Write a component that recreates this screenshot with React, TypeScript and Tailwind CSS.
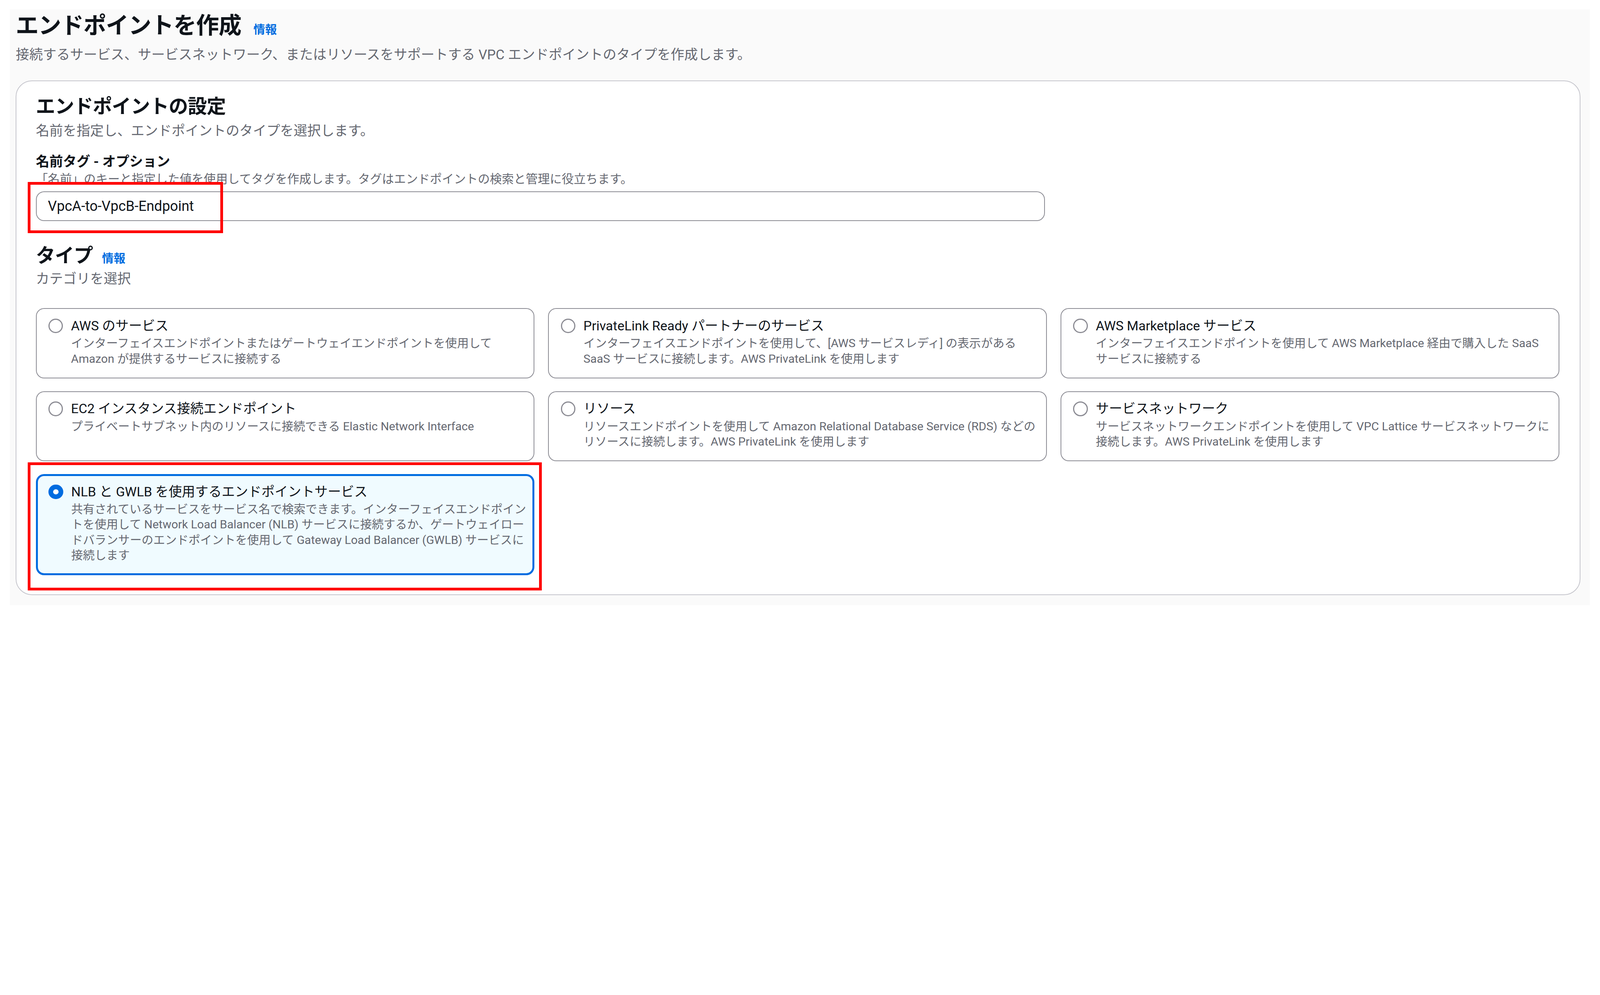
import React from 'react';

type Tile = {
  title: string;
  lines: string[];
  selected?: boolean;
};

const tiles: Tile[] = [
  {
    title: 'AWS のサービス',
    lines: ['インターフェイスエンドポイントまたはゲートウェイエンドポイントを使用して', 'Amazon が提供するサービスに接続する'],
  },
  {
    title: 'PrivateLink Ready パートナーのサービス',
    lines: ['インターフェイスエンドポイントを使用して、[AWS サービスレディ] の表示がある', 'SaaS サービスに接続します。AWS PrivateLink を使用します'],
  },
  {
    title: 'AWS Marketplace サービス',
    lines: ['インターフェイスエンドポイントを使用して AWS Marketplace 経由で購入した SaaS', 'サービスに接続する'],
  },
  {
    title: 'EC2 インスタンス接続エンドポイント',
    lines: ['プライベートサブネット内のリソースに接続できる Elastic Network Interface'],
  },
  {
    title: 'リソース',
    lines: ['リソースエンドポイントを使用して Amazon Relational Database Service (RDS) などの', 'リソースに接続します。AWS PrivateLink を使用します'],
  },
  {
    title: 'サービスネットワーク',
    lines: ['サービスネットワークエンドポイントを使用して VPC Lattice サービスネットワークに', '接続します。AWS PrivateLink を使用します'],
  },
  {
    title: 'NLB と GWLB を使用するエンドポイントサービス',
    selected: true,
    lines: [
      '共有されているサービスをサービス名で検索できます。インターフェイスエンドポイン',
      'トを使用して Network Load Balancer (NLB) サービスに接続するか、ゲートウェイロー',
      'ドバランサーのエンドポイントを使用して Gateway Load Balancer (GWLB) サービスに',
      '接続します',
    ],
  },
];

function TypeTile({ tile }: { tile: Tile }) {
  return (
    <div
      className={
        tile.selected
          ? 'flex gap-[7.8px] rounded-[8px] border-2 border-[#006ce0] bg-[#f0fbff] pt-[6px] pb-[10.3px] pl-[10.5px] pr-[10px]'
          : 'flex gap-[7.8px] rounded-[8px] border border-[#8c8c94] bg-white pt-[7px] pb-[11.3px] pl-[11.5px] pr-[11px]'
      }
    >
      {/* radio */}
      <span
        className={
          tile.selected
            ? 'mt-[2.3px] h-[14.4px] w-[14.4px] shrink-0 rounded-full border-[4.6px] border-[#006ce0] bg-white'
            : 'mt-[2.3px] h-[14.4px] w-[14.4px] shrink-0 rounded-full border-[1.5px] border-[#8c8c94] bg-white'
        }
      />
      <div className="min-w-0">
        <div className="whitespace-nowrap text-[13px] leading-[19px] text-[#0f141a]">{tile.title}</div>
        <div className="text-[11.5px] leading-[15px] text-[#656871]">
          {tile.lines.map((line) => (
            <div key={line} className="whitespace-nowrap">
              {line}
            </div>
          ))}
        </div>
      </div>
    </div>
  );
}

export default function App() {
  return (
    <div className="relative h-[603px] w-[1568px] bg-white pt-[9.3px] pl-[9.5px] pr-[10px] font-['Roboto','Noto_Sans_CJK_JP',sans-serif] [zoom:2.6122]">
      <div className="h-[584.2px] bg-[#fafafa] pt-[1.2px] pl-[5.9px] pr-[9px]">
        {/* Page header */}
        <div className="flex items-baseline">
          <h1 className="text-[22.5px] font-bold leading-[30px] tracking-[-0.4px] text-[#0f141a]">エンドポイントを作成</h1>
          <span className="ml-[12px] text-[11.5px] font-bold text-[#006ce0]">情報</span>
        </div>
        <p className="mt-[3.2px] text-[13.3px] leading-[20px] text-[#656871]">
          接続するサービス、サービスネットワーク、またはリソースをサポートする VPC エンドポイントのタイプを作成します。
        </p>

        {/* Settings container */}
        <div className="mt-[15.3px] rounded-[16px] border border-[#c6c6cd] bg-white pt-[12.8px] pb-[18.7px] pl-[19px] pr-[20.2px]">
          <h2 className="text-[19px] font-bold leading-[24px] tracking-[-0.4px] text-[#0f141a]">エンドポイントの設定</h2>
          <p className="mt-[1.6px] text-[13.3px] leading-[20px] text-[#656871]">名前を指定し、エンドポイントのタイプを選択します。</p>

          <div className="mt-[11.6px] text-[13.3px] font-bold leading-[18px] text-[#0f141a]">名前タグ - オプション</div>
          <div className="text-[11.75px] leading-[16px] text-[#656871]">
            「名前」のキーと指定した値を使用してタグを作成します。タグはエンドポイントの検索と管理に役立ちます。
          </div>
          <input
            readOnly
            value="VpcA-to-VpcB-Endpoint"
            className="mt-[3.8px] block h-[29.2px] w-[989px] rounded-[8px] border border-[#8c8c94] bg-white px-[11px] text-[13.8px] text-[#0f141a] outline-none"
          />

          <div className="mt-[22px] flex items-baseline">
            <h2 className="text-[19px] font-bold leading-[24px] tracking-[-0.4px] text-[#0f141a]">タイプ</h2>
            <span className="ml-[9px] text-[11.5px] font-bold text-[#006ce0]">情報</span>
          </div>
          <p className="mt-[0.8px] text-[13.3px] leading-[20px] text-[#656871]">カテゴリを選択</p>

          <div className="mt-[18.7px] grid grid-cols-3 gap-x-[13.5px] gap-y-[12.4px]">
            {tiles.map((tile) => (
              <TypeTile key={tile.title} tile={tile} />
            ))}
          </div>
        </div>
      </div>

      {/* red annotation boxes */}
      <div className="pointer-events-none absolute left-[27px] top-[178.5px] h-[50.2px] w-[191.7px] border-[3px] border-[#ff0000]" />
      <div className="pointer-events-none absolute left-[27px] top-[453.2px] h-[125.8px] w-[504px] border-[3px] border-[#ff0000]" />
    </div>
  );
}
